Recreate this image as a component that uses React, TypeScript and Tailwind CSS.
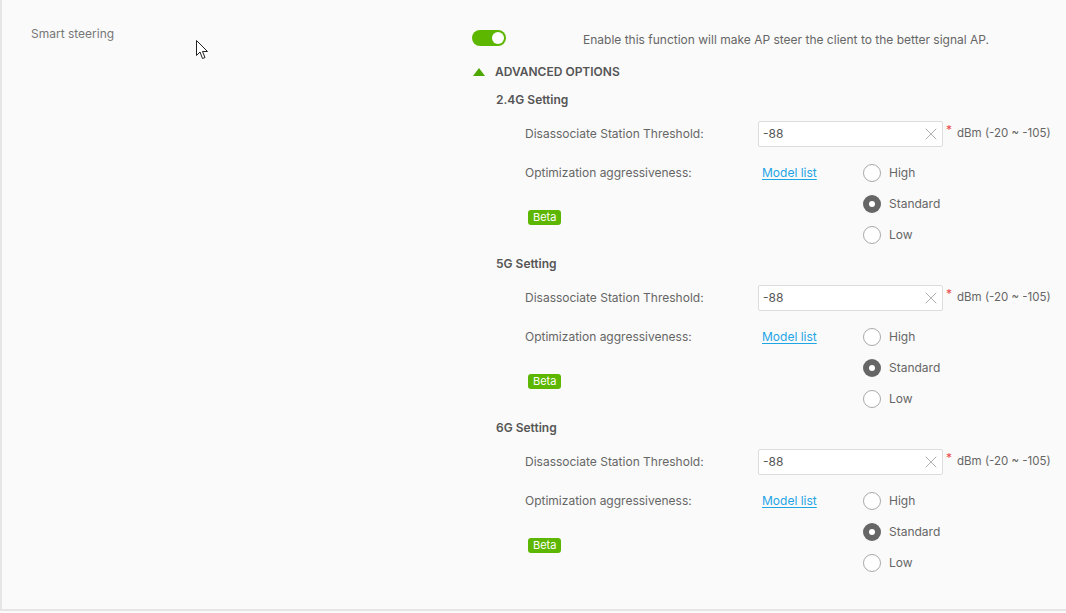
import { X } from 'lucide-react'

const bands = ['2.4G', '5G', '6G']

const Radio = ({ label, checked }: { label: string; checked?: boolean }) => (
  <div className="flex h-[31px] items-center">
    {checked ? (
      <span className="flex h-[18px] w-[18px] items-center justify-center rounded-full bg-[#666]">
        <span className="h-[6px] w-[6px] rounded-full bg-white" />
      </span>
    ) : (
      <span className="h-[18px] w-[18px] rounded-full border border-[#aaa] bg-white" />
    )}
    <span className="ml-[8px] text-[#666]">{label}</span>
  </div>
)

const BandSetting = ({ band }: { band: string }) => (
  <div className="pb-[4px]">
    <div className="flex h-[20px] items-center font-semibold text-[#555]">{band} Setting</div>
    <div className="ml-[29px] mt-[11px] flex h-[26px] items-center">
      <div className="w-[233px] text-[#666]">Disassociate Station Threshold:</div>
      <div className="flex h-[26px] w-[185px] items-center rounded-[2px] border border-[#ddd] bg-white pl-[4px] pr-[1px] text-[#555]">
        <span className="flex-1">-88</span>
        <X className="h-[20px] w-[20px] text-[#aaa]" strokeWidth={1.1} />
      </div>
      <span className="ml-[3px] self-start text-[#e84a4a]">*</span>
      <span className="ml-[5px] text-[11.5px] text-[#666]">dBm (-20 ~ -105)</span>
    </div>
    <div className="ml-[29px] mt-[10px] flex">
      <div className="w-[233px]">
        <div className="flex h-[31px] items-center text-[#666]">Optimization aggressiveness:</div>
        <span className="ml-[3px] mt-[22px] inline-flex h-[15px] items-center rounded-[3px] bg-[#5db600] px-[5px] text-[11px] text-white">
          Beta
        </span>
      </div>
      <div className="w-[105px] pl-[4px]">
        <div className="flex h-[31px] items-center">
          <span className="text-[#1ea5e6] underline underline-offset-2">Model list</span>
        </div>
      </div>
      <div>
        <Radio label="High" />
        <Radio label="Standard" checked />
        <Radio label="Low" />
      </div>
    </div>
  </div>
)

export default function App() {
  return (
    <div className="relative h-[613px] w-[1066px] overflow-hidden bg-[#fafafa] font-['Inter',sans-serif] text-[12px]">
      <div className="flex h-[611px] border-b-2 border-l-2 border-[#e6e6e6]">
        <div className="w-[470px] pl-[29px] pt-[26px]">
          <div className="h-[16px] leading-[16px] text-[#777]">Smart steering</div>
        </div>
        <div className="flex-1 pt-[30px]">
          <div className="flex items-start">
            <div className="w-[111px]">
              <div className="flex h-[16px] w-[34px] items-center justify-end rounded-full bg-[#5db600] pr-[2px]">
                <span className="h-[12px] w-[12px] rounded-full bg-white" />
              </div>
            </div>
            <span className="pt-[2px] leading-[16px] text-[#666]">
              Enable this function will make AP steer the client to the better signal AP.
            </span>
          </div>
          <div className="mt-[14px] flex h-[20px] items-center">
            <svg width="12" height="8" viewBox="0 0 12 8" className="ml-[1px]">
              <polygon points="6,0 12,8 0,8" fill="#4ea600" />
            </svg>
            <span className="ml-[10px] font-semibold text-[#555]">ADVANCED OPTIONS</span>
          </div>
          <div className="ml-[24px] mt-[8px]">
            {bands.map((b) => (
              <BandSetting key={b} band={b} />
            ))}
          </div>
        </div>
      </div>
      <svg className="absolute left-[196px] top-[40px]" width="13" height="20" viewBox="0 0 13 20">
        <path d="M0.5 0.5 L0.5 15.5 L4 12 L6.5 18.5 L9 17.5 L6.5 11.5 L11.5 11.5 Z" fill="white" stroke="#222" strokeWidth="1" />
      </svg>
    </div>
  )
}
